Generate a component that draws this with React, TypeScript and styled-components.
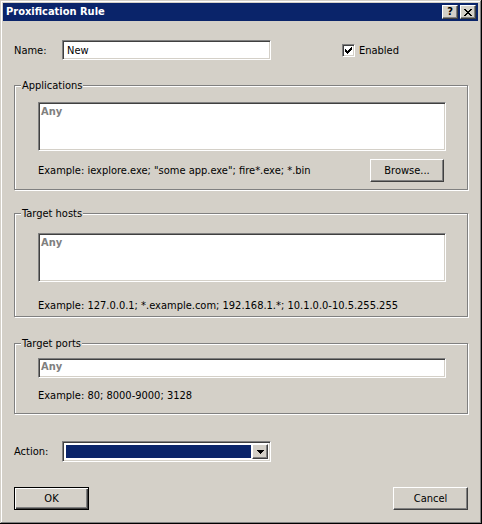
import React from 'react'
import styled, { createGlobalStyle } from 'styled-components'

const GlobalStyle = createGlobalStyle`
  html, body {
    margin: 0;
    padding: 0;
    background: #d4d0c8;
  }
  body {
    font-family: Tahoma, "DejaVu Sans Condensed", "Liberation Sans", sans-serif;
    font-size: 11px;
    color: #000000;
  }
`

const Window = styled.div`
  width: 482px;
  height: 524px;
  box-sizing: border-box;
  padding: 3px 4px 4px 3px;
  display: flex;
  flex-direction: column;
  background: #d4d0c8;
  box-shadow: inset -1px -1px 0 #000000, inset 1px 1px 0 #d4d0c8, inset -2px -2px 0 #808080,
    inset 2px 2px 0 #ffffff;
`

const TitleBar = styled.div`
  height: 18px;
  display: flex;
  align-items: center;
  padding: 0 2px 0 3px;
  background: #0a246a;
  color: #ffffff;
  font-weight: bold;
`

const TitleText = styled.div`
  flex: 1;
  line-height: 18px;
`

const CaptionButtons = styled.div`
  display: flex;
  gap: 2px;
`

const raised = `
  box-sizing: border-box;
  background: #d4d0c8;
  border: 1px solid;
  border-color: #ffffff #404040 #404040 #ffffff;
  box-shadow: inset -1px -1px 0 #808080, inset 1px 1px 0 #d4d0c8;
`

const sunken = `
  box-sizing: border-box;
  background: #ffffff;
  border: 1px solid;
  border-color: #808080 #ffffff #ffffff #808080;
  box-shadow: inset 1px 1px 0 #404040, inset -1px -1px 0 #d4d0c8;
`

const CaptionButton = styled.div`
  ${raised}
  width: 16px;
  height: 14px;
  display: flex;
  align-items: center;
  justify-content: center;
  color: #000000;
  font-size: 11px;
  font-weight: bold;
  line-height: 12px;
`

const Client = styled.div`
  flex: 1;
  display: flex;
  flex-direction: column;
  padding: 19px 10px 0 11px;
`

const Row = styled.div<{ $top?: number }>`
  display: flex;
  align-items: center;
  margin-top: ${({ $top }) => $top || 0}px;
`

const Label = styled.div`
  width: 48px;
`

const EditBox = styled.div<{ $width?: number; $height: number; $pad?: string }>`
  ${sunken}
  width: ${({ $width }) => ($width ? `${$width}px` : '100%')};
  height: ${({ $height }) => $height}px;
  padding: ${({ $pad }) => $pad || '3px 4px'};
  line-height: 13px;
`

const Placeholder = styled.span`
  color: #808080;
  font-weight: bold;
`

const CheckLabel = styled.label`
  display: flex;
  align-items: center;
  gap: 4px;
  margin-left: 71px;
`

const CheckBox = styled.div`
  ${sunken}
  width: 13px;
  height: 13px;
  display: flex;
  align-items: center;
  justify-content: center;
`

const Group = styled.fieldset<{ $top: number }>`
  margin: ${({ $top }) => $top}px 0 0;
  padding: 0;
  min-width: 0;
  border: 1px solid #808080;
  box-shadow: 1px 1px 0 #ffffff, inset 1px 1px 0 #ffffff;
`

const Legend = styled.legend`
  margin-left: 6px;
  padding: 0 1px;
  line-height: 13px;
  background: #d4d0c8;
`

const GroupBody = styled.div<{ $pad: string }>`
  padding: ${({ $pad }) => $pad};
`

const Hint = styled.div<{ $top?: number }>`
  line-height: 13px;
  margin-top: ${({ $top }) => $top || 0}px;
`

const HintRow = styled.div`
  display: flex;
  align-items: center;
  justify-content: space-between;
  margin-top: 8px;
  padding-right: 2px;
`

const Button = styled.div<{ $width: number; $default?: boolean }>`
  ${raised}
  width: ${({ $width }) => $width}px;
  height: 23px;
  display: flex;
  align-items: center;
  justify-content: center;
  ${({ $default }) =>
    $default &&
    `
    border: 1px solid #000000;
    box-shadow: inset 1px 1px 0 #ffffff, inset -1px -1px 0 #404040, inset -2px -2px 0 #808080;
  `}
`

const Combo = styled.div`
  ${sunken}
  width: 209px;
  height: 21px;
  padding: 2px;
  display: flex;
`

const ComboValue = styled.div`
  flex: 1;
  margin: 1px;
  background: #0a246a;
`

const ComboButton = styled.div`
  ${raised}
  width: 16px;
  display: flex;
  align-items: center;
  justify-content: center;
`

const ButtonBar = styled.div`
  display: flex;
  justify-content: space-between;
  margin-top: 25px;
`

const CloseGlyph = () => (
  <svg width="8" height="7" viewBox="0 0 8 7" shapeRendering="crispEdges">
    <path
      fill="#000"
      d="M0 0h2v1h-2zM6 0h2v1h-2zM1 1h2v1h-2zM5 1h2v1h-2zM2 2h4v1h-4zM3 3h2v1h-2zM2 4h4v1h-4zM1 5h2v1h-2zM5 5h2v1h-2zM0 6h2v1h-2zM6 6h2v1h-2z"
    />
  </svg>
)

const CheckGlyph = () => (
  <svg width="7" height="7" viewBox="0 0 7 7" shapeRendering="crispEdges">
    <path
      fill="#000"
      d="M0 2h1v3h-1zM1 3h1v3h-1zM2 4h1v3h-1zM3 3h1v3h-1zM4 2h1v3h-1zM5 1h1v3h-1zM6 0h1v3h-1z"
    />
  </svg>
)

const ArrowGlyph = () => (
  <svg width="7" height="4" viewBox="0 0 7 4" shapeRendering="crispEdges">
    <path fill="#000" d="M0 0h7v1h-7zM1 1h5v1h-5zM2 2h3v1h-3zM3 3h1v1h-1z" />
  </svg>
)

const App = () => {
  return (
    <>
      <GlobalStyle />
      <Window>
        <TitleBar>
          <TitleText>Proxification Rule</TitleText>
          <CaptionButtons>
            <CaptionButton>?</CaptionButton>
            <CaptionButton>
              <CloseGlyph />
            </CaptionButton>
          </CaptionButtons>
        </TitleBar>

        <Client>
          <Row>
            <Label>Name:</Label>
            <EditBox $width={209} $height={20}>
              New
            </EditBox>
            <CheckLabel>
              <CheckBox>
                <CheckGlyph />
              </CheckBox>
              Enabled
            </CheckLabel>
          </Row>

          <Group $top={19}>
            <Legend>Applications</Legend>
            <GroupBody $pad="10px 21px 7px 23px">
              <EditBox $height={49} $pad="2px 2px">
                <Placeholder>Any</Placeholder>
              </EditBox>
              <HintRow>
                <Hint>Example: iexplore.exe; "some app.exe"; fire*.exe; *.bin</Hint>
                <Button $width={74}>Browse...</Button>
              </HintRow>
            </GroupBody>
          </Group>

          <Group $top={17}>
            <Legend>Target hosts</Legend>
            <GroupBody $pad="13px 21px 4px 23px">
              <EditBox $height={49} $pad="2px 2px">
                <Placeholder>Any</Placeholder>
              </EditBox>
              <Hint $top={17}>Example: 127.0.0.1; *.example.com; 192.168.1.*; 10.1.0.0-10.5.255.255</Hint>
            </GroupBody>
          </Group>

          <Group $top={20}>
            <Legend>Target ports</Legend>
            <GroupBody $pad="8px 21px 11px 23px">
              <EditBox $height={20} $pad="1px 2px">
                <Placeholder>Any</Placeholder>
              </EditBox>
              <Hint $top={11}>Example: 80; 8000-9000; 3128</Hint>
            </GroupBody>
          </Group>

          <Row $top={27}>
            <Label>Action:</Label>
            <Combo>
              <ComboValue />
              <ComboButton>
                <ArrowGlyph />
              </ComboButton>
            </Combo>
          </Row>

          <ButtonBar>
            <Button $width={75} $default>
              OK
            </Button>
            <Button $width={75}>Cancel</Button>
          </ButtonBar>
        </Client>
      </Window>
    </>
  )
}

export default App
